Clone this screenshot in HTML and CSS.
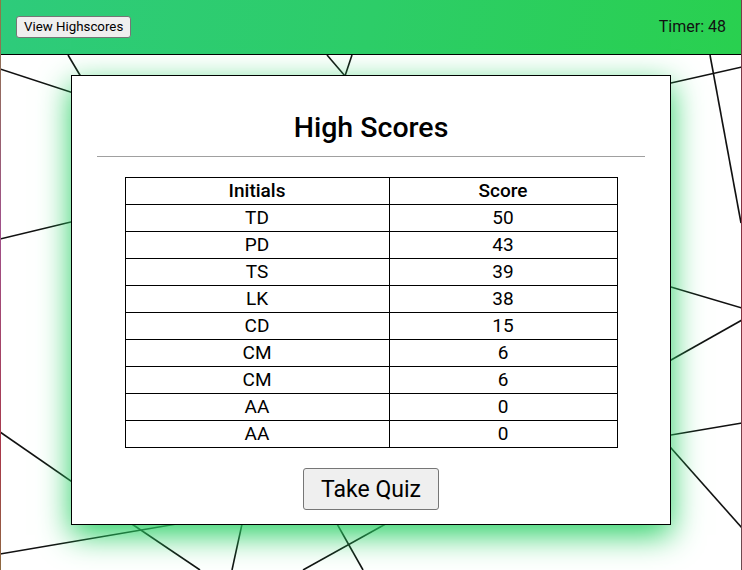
FILE: index.html
```html
<!DOCTYPE html>
<html lang="en">
<head>
<meta charset="utf-8">
<title>High Scores</title>
<link rel="stylesheet" href="styles.css">
</head>
<body>
<svg class="bg" width="742" height="570" viewBox="0 0 742 570" aria-hidden="true">
  <defs>
    <linearGradient id="edgeL" x1="0" y1="0" x2="0" y2="1">
      <stop offset="0" stop-color="#8c7a45"/>
      <stop offset="0.4" stop-color="#a0508a"/>
      <stop offset="0.8" stop-color="#a83848"/>
      <stop offset="1" stop-color="#8c6a40"/>
    </linearGradient>
    <linearGradient id="edgeR" x1="0" y1="0" x2="0" y2="1">
      <stop offset="0" stop-color="#7a3a48"/>
      <stop offset="0.5" stop-color="#8a3040"/>
      <stop offset="1" stop-color="#6a4a50"/>
    </linearGradient>
  </defs>
  <g stroke="#111" stroke-width="1.6" fill="none">
    <line x1="0" y1="69" x2="150" y2="118"/>
    <line x1="68" y1="55" x2="90" y2="92"/>
    <line x1="0" y1="239" x2="150" y2="203"/>
    <line x1="327" y1="55" x2="345" y2="76"/>
    <line x1="352" y1="55" x2="345" y2="76"/>
    <line x1="710" y1="55" x2="741" y2="223"/>
    <line x1="600" y1="99" x2="742" y2="67"/>
    <line x1="600" y1="266" x2="742" y2="308"/>
    <line x1="600" y1="400" x2="742" y2="320"/>
    <line x1="600" y1="447" x2="742" y2="423"/>
    <line x1="600" y1="368" x2="742" y2="528"/>
    <line x1="0" y1="432" x2="120" y2="515"/>
    <line x1="0" y1="554" x2="200" y2="520"/>
    <line x1="120" y1="516" x2="200" y2="570"/>
    <line x1="244" y1="515" x2="232" y2="570"/>
    <line x1="332" y1="515" x2="363" y2="570"/>
    <line x1="400" y1="516" x2="303" y2="570"/>
  </g>
  <rect x="0" y="0" width="1" height="570" fill="url(#edgeL)"/>
  <rect x="741" y="0" width="1" height="570" fill="url(#edgeR)"/>
</svg>

<header class="topbar">
  <button class="btn-small" type="button">View Highscores</button>
  <span class="timer">Timer: 48</span>
</header>

<main class="main">
  <section class="card">
    <h1 class="title">High Scores</h1>
    <hr class="divider">
    <table class="scores">
      <thead>
        <tr><th class="col-initials">Initials</th><th>Score</th></tr>
      </thead>
      <tbody>
        <tr><td>TD</td><td>50</td></tr>
        <tr><td>PD</td><td>43</td></tr>
        <tr><td>TS</td><td>39</td></tr>
        <tr><td>LK</td><td>38</td></tr>
        <tr><td>CD</td><td>15</td></tr>
        <tr><td>CM</td><td>6</td></tr>
        <tr><td>CM</td><td>6</td></tr>
        <tr><td>AA</td><td>0</td></tr>
        <tr><td>AA</td><td>0</td></tr>
      </tbody>
    </table>
    <div class="actions">
      <button class="btn-large" type="button">Take Quiz</button>
    </div>
  </section>
</main>
</body>
</html>
```

FILE: styles.css
```css
html, body {
  margin: 0;
  padding: 0;
}

body {
  position: relative;
  width: 742px;
  height: 570px;
  overflow: hidden;
  background: #fff;
  font-family: Roboto, "Liberation Sans", Arial, sans-serif;
  color: #000;
}

.bg {
  position: absolute;
  left: 0;
  top: 0;
  z-index: 0;
}

.topbar {
  position: relative;
  z-index: 1;
  margin: 0 1px;
  height: 54px;
  border-bottom: 1px solid #000;
  background: linear-gradient(100deg, #2ecb7b 0%, #2dcd68 50%, #29d04f 100%);
  display: flex;
  align-items: center;
  justify-content: space-between;
  padding: 0 16px 0 15px;
}

.btn-small {
  font-family: Roboto, "Liberation Sans", Arial, sans-serif;
  font-size: 13.3px;
  color: #000;
  background: #efefef;
  border: 1px solid #767676;
  border-radius: 3px;
  height: 22px;
  padding: 0 7px;
  margin-top: -1px;
}

.timer {
  font-size: 16px;
  color: #111;
  margin-top: -2px;
  margin-right: -1px;
}

.main {
  position: relative;
  z-index: 1;
  padding-top: 20px;
  display: flex;
  justify-content: center;
}

.card {
  width: 548px;
  height: 448px;
  background: #fff;
  border: 1px solid #000;
  box-shadow: 0 10px 30px rgba(40, 208, 100, 1);
  padding: 0 25px;
  box-sizing: content-box;
  display: flex;
  flex-direction: column;
  align-items: center;
}

.title {
  margin: 34px 0 0;
  font-size: 28.5px;
  font-weight: 500;
  line-height: 36px;
  text-align: center;
}

.divider {
  width: 100%;
  margin: 10px 0 0;
  border: 0;
  border-top: 1px solid #a0a0a0;
  height: 0;
}

.scores {
  margin-top: 20px;
  width: 493px;
  border-collapse: collapse;
  table-layout: fixed;
  font-size: 19px;
}

.scores th,
.scores td {
  border: 1px solid #000;
  height: 26px;
  padding: 0;
  line-height: 26px;
  text-align: center;
}

.scores .col-initials {
  width: 263px;
}

.scores th {
  font-weight: 500;
}

.actions {
  margin-top: 20px;
}

.btn-large {
  font-family: Roboto, "Liberation Sans", Arial, sans-serif;
  font-size: 23px;
  color: #000;
  background: #efefef;
  border: 1px solid #767676;
  border-radius: 3px;
  width: 136px;
  height: 42px;
  padding: 0;
}
```
